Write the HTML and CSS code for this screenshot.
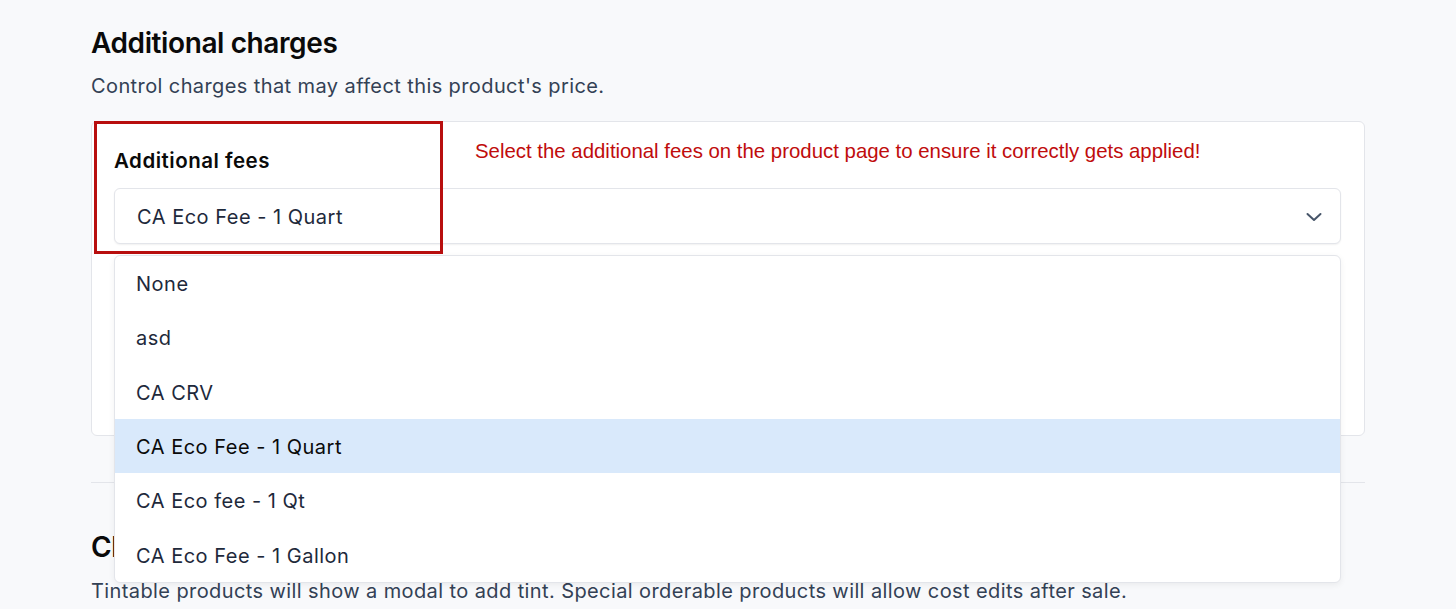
FILE: index.html
```html
<!DOCTYPE html>
<html>
<head>
<meta charset="utf-8">
<link rel="stylesheet" href="styles.css">
</head>
<body>
<div class="page">
  <section class="section">
    <h2 class="title">Additional charges</h2>
    <p class="subtitle">Control charges that may affect this product's price.</p>
    <div class="card">
      <div class="field">
        <div class="label">Additional fees</div>
        <div class="select">
          <span class="select-value">CA Eco Fee - 1 Quart</span>
          <svg class="chevron" width="20" height="20" viewBox="0 0 20 20"><path d="M3.5 7 L10 13 L16.5 7" fill="none" stroke="#475569" stroke-width="2" stroke-linecap="round" stroke-linejoin="round"/></svg>
        </div>
        <ul class="menu">
          <li class="option">None</li>
          <li class="option">asd</li>
          <li class="option">CA CRV</li>
          <li class="option active">CA Eco Fee - 1 Quart</li>
          <li class="option">CA Eco fee - 1 Qt</li>
          <li class="option">CA Eco Fee - 1 Gallon</li>
        </ul>
      </div>
      <div class="annot-box"></div>
      <div class="annot-text">Select the additional fees on the product page to ensure it correctly gets applied!</div>
    </div>
  </section>
  <hr class="divider">
  <section class="section second">
    <h2 class="title">Classification</h2>
    <p class="subtitle">Tintable products will show a modal to add tint. Special orderable products will allow cost edits after sale.</p>
  </section>
</div>
</body>
</html>
```
FILE: styles.css
```css
html, body {
  margin: 0;
  padding: 0;
  background: #f8f9fb;
  font-family: Inter, "Noto Sans", sans-serif;
  overflow: hidden;
  height: 609px;
}
.page {
  padding: 0 91px;
  width: 1274px;
}
.section {
  display: flex;
  flex-direction: column;
}
.title {
  margin: 26px 0 0 0;
  font-size: 28px;
  line-height: 34px;
  font-weight: 600;
  color: #0a0a0a;
  letter-spacing: -0.4px;
}
.subtitle {
  margin: 14px 0 0 0;
  font-size: 20px;
  line-height: 24px;
  color: #334155;
  letter-spacing: 0.4px;
}
.card {
  position: relative;
  margin-top: 23px;
  background: #fff;
  border: 1px solid #e3e5ea;
  border-radius: 6px;
  padding: 27px 23px 0 22px;
  height: 315px;
  box-sizing: border-box;
}
.field {
  position: relative;
}
.label {
  font-size: 20.5px;
  line-height: 24px;
  font-weight: 600;
  color: #0a0a0a;
  letter-spacing: 0.5px;
}
.select {
  margin-top: 15px;
  height: 56px;
  box-sizing: border-box;
  border: 1px solid #e3e5ea;
  border-radius: 6px;
  box-shadow: 0 1px 2px rgba(0,0,0,0.06);
  display: flex;
  align-items: center;
  justify-content: space-between;
  padding: 1px 16px 0 22px;
  background: #fff;
}
.select-value {
  font-size: 20px;
  color: #1e293b;
  letter-spacing: 0.5px;
}
.chevron {
  display: block;
}
.menu {
  position: absolute;
  z-index: 5;
  left: 0;
  right: 0;
  top: 106px;
  margin: 0;
  padding: 0;
  list-style: none;
  background: #fff;
  border: 1px solid #e3e5ea;
  border-radius: 6px;
  box-shadow: 0 2px 6px rgba(0,0,0,0.06);
  overflow: hidden;
}
.option {
  height: 54.3px;
  box-sizing: border-box;
  display: flex;
  align-items: center;
  padding: 2px 0 0 21px;
  font-size: 20px;
  color: #1e293b;
  letter-spacing: 0.5px;
}
.option.active {
  background: #d9e9fb;
  color: #0a0a0a;
}
.annot-box {
  position: absolute;
  left: 2px;
  top: -1px;
  width: 349px;
  height: 133px;
  border: 3px solid #b80e0e;
  box-sizing: border-box;
  z-index: 6;
  pointer-events: none;
}
.annot-text {
  position: absolute;
  left: 383px;
  top: 18px;
  font-family: "Liberation Sans", Arial, sans-serif;
  font-size: 20.4px;
  color: #c00c0c;
  z-index: 6;
}
.divider {
  margin: 46px 0 0 0;
  border: 0;
  border-top: 1px solid #e3e5ea;
  height: 0;
}
.second .title {
  margin-top: 47px;
}
.second .subtitle {
  margin-top: 15px;
}
```
